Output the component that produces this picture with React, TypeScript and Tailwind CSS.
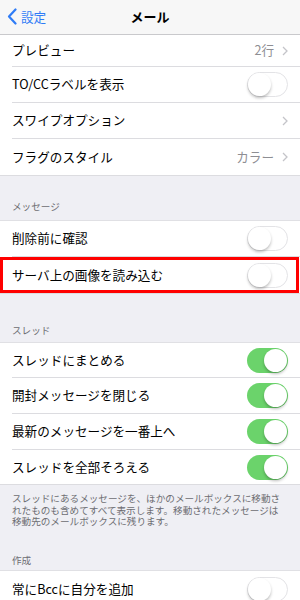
import React from 'react';

const font = { fontFamily: '"Noto Sans CJK JP", "Noto Sans", sans-serif' };

const Toggle: React.FC<{ on?: boolean }> = ({ on }) => (
  <div
    className={
      on
        ? 'relative w-[41px] h-[25px] rounded-full bg-[#6bd36b]'
        : 'relative w-[41px] h-[25px] rounded-full bg-white border border-[#e3e3e6]'
    }
  >
    <div
      className={
        on
          ? 'absolute right-[1px] top-[1px] w-[23px] h-[23px] rounded-full bg-white shadow-[0_2px_3px_rgba(0,0,0,0.25)]'
          : 'absolute left-0 top-0 w-[23px] h-[23px] rounded-full bg-white shadow-[0_2px_3px_rgba(0,0,0,0.25)]'
      }
    />
  </div>
);

const Chevron = () => (
  <svg width="6" height="10" viewBox="0 0 6 10" className="ml-[8px]">
    <path d="M1 1l4 4-4 4" fill="none" stroke="#c4c4c9" strokeWidth="1.3" />
  </svg>
);

interface RowProps {
  label: string;
  value?: string;
  chevron?: boolean;
  toggle?: boolean;
  on?: boolean;
  last?: boolean;
  h?: string;
}

const Row: React.FC<RowProps> = ({ label, value, chevron, toggle, on, last, h }) => (
  <div className={`flex items-center pl-3 bg-white ${h ?? 'h-9'}`}>
    <div
      className={`flex-1 h-full flex items-center pr-[12px] ${
        last ? '' : 'border-b border-[#dcdce0]'
      }`}
    >
      <span className="flex-1 text-[12.6px] text-black">{label}</span>
      {value && <span className="text-[12.6px] text-[#8e8e93]">{value}</span>}
      {chevron && <Chevron />}
      {toggle && <Toggle on={on} />}
    </div>
  </div>
);

const Header: React.FC<{ title: string; h: string; pb?: string }> = ({ title, h, pb }) => (
  <div className={`flex items-end px-3 ${pb ?? 'pb-[7px]'} ${h} border-b border-[#e0e0e4]`}>
    <span className="text-[9.6px] leading-[12px] text-[#6d6d72]">{title}</span>
  </div>
);

export default function App() {
  return (
    <div className="w-[300px] h-[600px] overflow-hidden bg-[#efeff4] relative" style={font}>
      {/* ナビゲーションバー */}
      <div className="h-[35px] bg-[#f7f7f7] border-b border-[#c9c9cc] flex items-center relative">
        <div className="flex items-center pl-[7px] text-[#2f7cf6]">
          <svg width="10" height="17" viewBox="0 0 10 17">
            <path d="M8.5 1.5L2 8.5l6.5 7" fill="none" stroke="#2f7cf6" strokeWidth="2.2" strokeLinecap="round" strokeLinejoin="round" />
          </svg>
          <span className="ml-[4px] text-[12.6px]">設定</span>
        </div>
        <span className="absolute left-0 right-0 text-center text-[13px] font-bold text-black pointer-events-none">
          メール
        </span>
      </div>

      {/* 一般 */}
      <div className="border-b border-[#dcdce0]">
        <Row label="プレビュー" value="2行" chevron h="h-[32px]" />
        <Row label="TO/CCラベルを表示" toggle />
        <Row label="スワイプオプション" chevron />
        <Row label="フラグのスタイル" value="カラー" chevron last />
      </div>

      {/* メッセージ */}
      <Header title="メッセージ" h="h-[45px]" pb="pb-[8px]" />
      <div className="border-b border-[#dcdce0]">
        <Row label="削除前に確認" toggle />
        <Row label="サーバ上の画像を読み込む" toggle last />
      </div>

      {/* スレッド */}
      <Header title="スレッド" h="h-[49px]" pb="pb-[6px]" />
      <div className="border-b border-[#dcdce0]">
        <Row label="スレッドにまとめる" toggle on h="h-[35px]" />
        <Row label="開封メッセージを閉じる" toggle on />
        <Row label="最新のメッセージを一番上へ" toggle on />
        <Row label="スレッドを全部そろえる" toggle on last h="h-[34px]" />
      </div>
      <div className="px-3 pt-[8px] h-[46px] text-[9.6px] leading-[11.7px] text-[#6d6d72] whitespace-nowrap">
        <div>スレッドにあるメッセージを、ほかのメールボックスに移動さ</div>
        <div>れたものも含めてすべて表示します。移動されたメッセージは</div>
        <div>移動先のメールボックスに残ります。</div>
      </div>

      {/* 作成 */}
      <Header title="作成" h="h-[40px]" pb="pb-[4px]" />
      <div>
        <Row label="常にBccに自分を追加" toggle last />
      </div>

      {/* 強調枠 */}
      <div className="absolute left-0 top-[257px] w-[299px] h-[36px] border-[3px] border-[#f00] pointer-events-none" />
    </div>
  );
}
